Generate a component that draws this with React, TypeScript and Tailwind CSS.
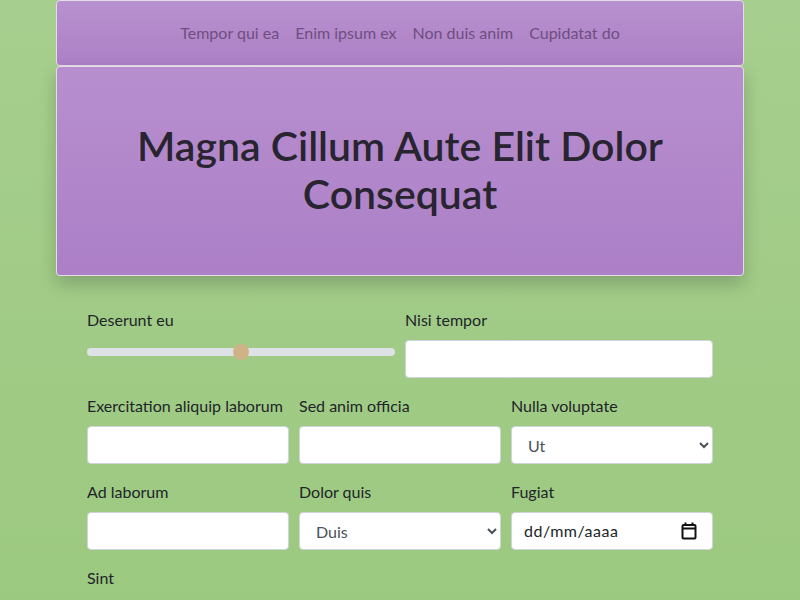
export default function App() {
  return (
    <div className="min-h-[600px] bg-gradient-to-b from-[#a6ce8e] to-[#9cc980] font-['Lato',sans-serif] text-[#212529]">
      <div className="mx-auto w-[688px]">
        <nav className="h-[66px] rounded border border-[#e6dbe9] bg-gradient-to-b from-[#b891cf] to-[#ad80c6] flex items-center justify-center gap-4 text-[#6e4f80] text-base">
          <a href="#">Tempor qui ea</a>
          <a href="#">Enim ipsum ex</a>
          <a href="#">Non duis anim</a>
          <a href="#">Cupidatat do</a>
        </nav>
        <header className="h-[210px] rounded border border-[#e6dbe9] bg-gradient-to-b from-[#b78fcf] to-[#ac7fc6] shadow-[0_8px_18px_rgba(0,0,0,0.2)] flex items-center justify-center px-16 pb-[3px]">
          <h1 className="text-center text-[41px] leading-[48px] font-semibold text-[#282430]">
            Magna Cillum Aute Elit Dolor Consequat
          </h1>
        </header>
      </div>
      <form className="mx-auto w-[626px] pt-[32px]">
        <div className="grid grid-cols-2 gap-x-[10px]">
          <div>
            <label className="block mb-[8px] h-[24px] leading-[24px]">Deserunt eu</label>
            <div className="relative h-[24px] flex items-center">
              <div className="w-full h-[8px] rounded-full bg-[#dee2e6]" />
              <div className="absolute left-[146px] w-[16px] h-[16px] rounded-full bg-[#d0b287]" />
            </div>
          </div>
          <Field label="Nisi tempor" />
        </div>
        <div className="grid grid-cols-3 gap-x-[10px] mt-[16px]">
          <Field label="Exercitation aliquip laborum" />
          <Field label="Sed anim officia" />
          <SelectField label="Nulla voluptate" value="Ut" />
        </div>
        <div className="grid grid-cols-3 gap-x-[10px] mt-[16px]">
          <Field label="Ad laborum" />
          <SelectField label="Dolor quis" value="Duis" />
          <div>
            <label className="block mb-[8px] h-[24px] leading-[24px]">Fugiat</label>
            <div className="w-full h-[38px] rounded border border-[#ced4da] bg-white pl-3 pr-[15px] flex items-center justify-between text-[#212529]">
              <span className="tracking-[0.5px]">dd/mm/aaaa</span>
              <svg width="16" height="18" viewBox="0 0 16 18" fill="none" stroke="#111" strokeWidth="2">
                <rect x="1.5" y="3" width="13" height="13.5" rx="1" />
                <line x1="1.5" y1="6.5" x2="14.5" y2="6.5" />
                <line x1="4.5" y1="0.5" x2="4.5" y2="3" />
                <line x1="11.5" y1="0.5" x2="11.5" y2="3" />
              </svg>
            </div>
          </div>
        </div>
        <div className="mt-[16px]">
          <label className="block h-[24px] leading-[24px]">Sint</label>
        </div>
      </form>
    </div>
  )
}

function Field({ label }: { label: string }) {
  return (
    <div>
      <label className="block mb-[8px] h-[24px] leading-[24px] whitespace-nowrap">{label}</label>
      <input type="text" className="w-full h-[38px] rounded border border-[#ced4da] bg-white px-3" />
    </div>
  )
}

function SelectField({ label, value }: { label: string; value: string }) {
  return (
    <div>
      <label className="block mb-[8px] h-[24px] leading-[24px]">{label}</label>
      <select
        defaultValue={value}
        className="w-full h-[38px] rounded border border-[#ced4da] bg-white px-3 text-[#495057]"
      >
        <option>{value}</option>
      </select>
    </div>
  )
}
